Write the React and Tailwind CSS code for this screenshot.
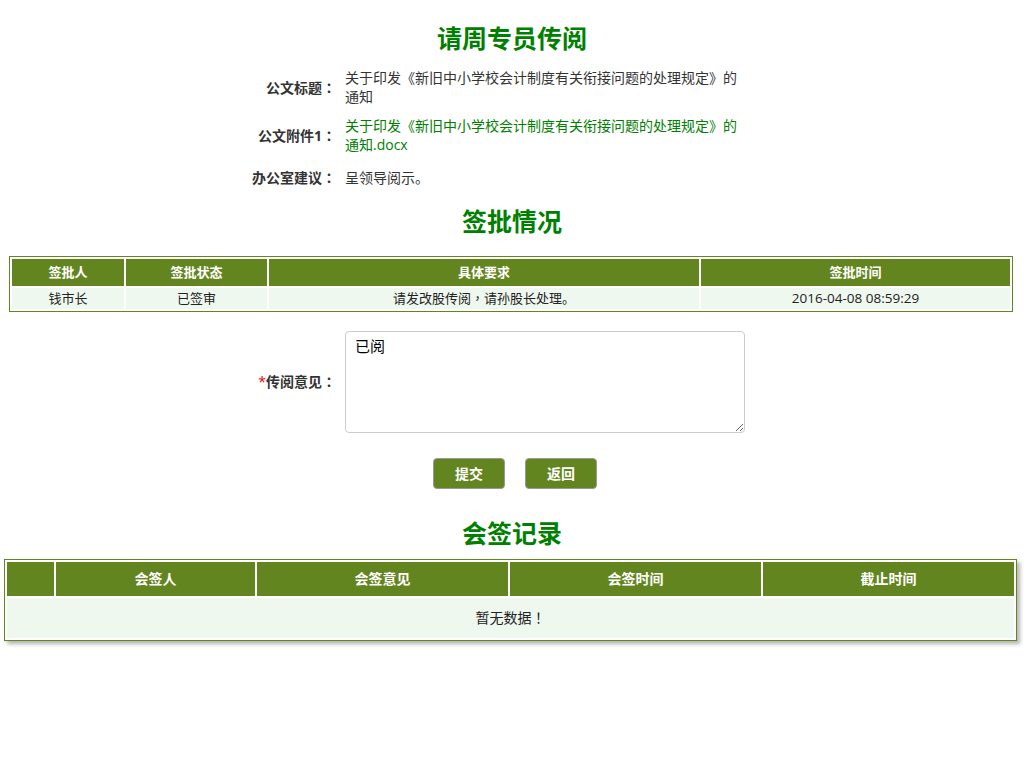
const font = { fontFamily: '"Open Sans", "Noto Sans CJK SC", sans-serif' }
const tc = { fontFamily: '"Noto Sans CJK TC", sans-serif' }

const signRows = [
  { name: "钱市长", status: "已签审", req: "请发改股传阅", req2: "请孙股长处理。", time: "2016-04-08 08:59:29" },
]

function FormRow({ label, required, children, className }) {
  return (
    <div className={"flex items-center " + (className || "")}>
      <div className="w-[336px] shrink-0 text-right text-[14px] font-bold text-[#333]">
        {required && <span className="font-normal text-red-600">*</span>}
        {label}<span style={tc}>：</span>
      </div>
      <div className="ml-[9px] w-[400px] text-[14px] leading-[19px] text-[#333]">{children}</div>
    </div>
  )
}

export default function App() {
  return (
    <div className="min-h-[768px] w-[1024px] bg-white pb-10" style={font}>
      <h1 className="pt-[20px] text-center text-[25px] font-bold leading-[36px] text-[#008000]">请周专员传阅</h1>

      <div className="mt-[12px]">
        <FormRow label="公文标题">关于印发《新旧中小学校会计制度有关衔接问题的处理规定》的通知</FormRow>
        <FormRow label="公文附件1" className="mt-[10px]">
          <span className="text-[#008000]">关于印发《新旧中小学校会计制度有关衔接问题的处理规定》的通知.docx</span>
        </FormRow>
        <FormRow label="办公室建议" className="mt-[13px]">呈领导阅示。</FormRow>
      </div>

      <h2 className="mt-[15px] text-center text-[25px] font-bold leading-[36px] text-[#008000]">签批情况</h2>

      <div className="ml-[9px] mt-[17px] w-[1004px] border border-[#63851f]">
        <table className="w-full border-separate border-spacing-[2px] text-[13px]">
          <thead>
            <tr className="bg-[#63851f] text-white">
              <th className="h-[27px] w-[112px] font-bold">签批人</th>
              <th className="w-[141px] font-bold">签批状态</th>
              <th className="w-[430px] font-bold">具体要求</th>
              <th className="font-bold">签批时间</th>
            </tr>
          </thead>
          <tbody>
            {signRows.map(r => (
              <tr key={r.name} className="bg-[#eff8ef] text-center text-[#222]">
                <td className="h-[20px] p-0">{r.name}</td>
                <td className="p-0">{r.status}</td>
                <td className="p-0">{r.req}<span style={tc}>，</span>{r.req2}</td>
                <td className="p-0 text-[13.5px]">{r.time}</td>
              </tr>
            ))}
          </tbody>
        </table>
      </div>

      <FormRow label="传阅意见" required className="mt-[19px]">
        <textarea
          defaultValue="已阅"
          className="block h-[102px] w-[400px] rounded-[4px] border border-[#ccc] px-[9px] py-[5px] text-[15px] text-black outline-none"
          style={font}
        />
      </FormRow>

      <div className="mt-[25px] flex justify-center gap-[20px] pl-[6px]">
        <button className="h-[31px] w-[72px] rounded-[4px] border border-[#999] bg-[#63851f] text-[14px] font-bold text-white">提交</button>
        <button className="h-[31px] w-[72px] rounded-[4px] border border-[#999] bg-[#63851f] text-[14px] font-bold text-white">返回</button>
      </div>

      <h2 className="mt-[26px] text-center text-[25px] font-bold leading-[36px] text-[#008000]">会签记录</h2>

      <div className="ml-[4px] mt-[8px] w-[1013px] border border-[#63851f] shadow-[3px_3px_4px_rgba(0,0,0,0.3)]">
        <table className="w-full border-separate border-spacing-[2px] text-[14px]">
          <thead>
            <tr className="bg-[#63851f] text-white">
              <th className="h-[34px] w-[47px]"></th>
              <th className="w-[199px] font-bold">会签人</th>
              <th className="w-[251px] font-bold">会签意见</th>
              <th className="w-[251px] font-bold">会签时间</th>
              <th className="font-bold">截止时间</th>
            </tr>
          </thead>
          <tbody>
            <tr className="bg-[#eff8ef]">
              <td colSpan={5} className="h-[40px] text-center text-[#222]">暂无数据<span style={tc}>！</span></td>
            </tr>
          </tbody>
        </table>
      </div>
    </div>
  )
}
